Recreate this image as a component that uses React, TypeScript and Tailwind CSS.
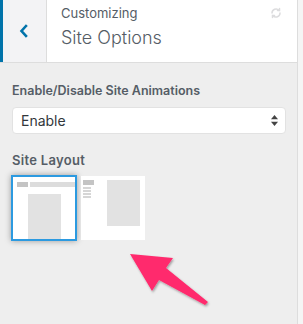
import React from 'react';

const ChevronLeft = () => (
  <svg width="12" height="14" viewBox="0 0 12 14" fill="none" stroke="#0073aa" strokeWidth="2.6" strokeLinecap="square" strokeLinejoin="miter">
    <path d="M8 2 L3.5 7 L8 12" />
  </svg>
);

const RefreshIcon = () => (
  <svg width="12" height="12" viewBox="0 0 24 24" fill="none" stroke="#dcdcde" strokeWidth="3" strokeLinecap="round">
    <path d="M4 12a8 8 0 0 1 14-5.3" />
    <path d="M20 12a8 8 0 0 1-14 5.3" />
    <path d="M19 3v4h-4" />
    <path d="M5 21v-4h4" />
  </svg>
);

// annotation arrow drawn over the screenshot
const PointerArrow = () => (
  <svg className="absolute left-0 top-0 pointer-events-none" width="303" height="324" viewBox="0 0 303 324">
    <defs>
      <filter id="sh" x="-20%" y="-20%" width="140%" height="140%">
        <feDropShadow dx="1" dy="1.5" stdDeviation="1" floodColor="#000" floodOpacity="0.35" />
      </filter>
    </defs>
    <polygon points="130,254 173,258 166,268 208,302 205,305 159,280 152,291" fill="#ff2a6d" filter="url(#sh)" />
  </svg>
);

const BoxedLayout = () => (
  <div className="w-[66px] h-[66px] bg-white border-2 border-[#2c9ae0] shadow-[0_0_6px_rgba(0,0,0,0.35)] flex flex-col pt-[5px] overflow-hidden">
    <div className="flex gap-[2px] pl-[4px]">
      <div className="w-[11px] h-[5px] bg-[#c4c4c4]" />
      <div className="w-[45px] h-[5px] bg-[#dcdcdc]" />
    </div>
    <div className="mt-[7px] ml-[15px] w-[33px] flex-1 bg-[#e2e2e2]" />
  </div>
);

const SidebarLayout = () => (
  <div className="w-[64px] h-[64px] mt-[1px] bg-white flex pt-[4px] pl-[2px]">
    <div className="w-[11px] flex flex-col">
      <div className="h-[5px] bg-[#c4c4c4]" />
      <div className="mt-[2px] flex flex-col gap-[1px] w-[8px]">
        <div className="h-[2px] bg-[#d6d6d6]" />
        <div className="h-[2px] bg-[#d6d6d6]" />
        <div className="h-[2px] bg-[#d6d6d6]" />
        <div className="h-[2px] bg-[#d6d6d6]" />
      </div>
    </div>
    <div className="ml-[13px] w-[33px] h-[46px] bg-[#e2e2e2]" />
  </div>
);

export default function App() {
  return (
    <div className="relative w-[303px] h-[324px] overflow-hidden bg-[#f5f5f5] flex" style={{ fontFamily: 'Inter, "Noto Sans", sans-serif' }}>
      <div className="w-[298px] h-full bg-[#eeeeee] border-r border-[#dddddd] flex flex-col">
        <div className="h-[63px] flex border-b border-[#dddddd] bg-white">
          <div className="w-[3px] bg-[#0073aa]" />
          <div className="w-[44px] bg-[#f3f3f5] border-r border-[#dddddd] flex items-center justify-center pr-[2px]">
            <ChevronLeft />
          </div>
          <div className="flex-1 flex pl-[14px] pr-[15px] pt-[4px]">
            <div className="flex-1">
              <div className="text-[13px] leading-[18px] text-[#555d66]">Customizing</div>
              <div className="text-[18px] leading-[24px] font-light text-[#555d66] mt-[4px]">Site Options</div>
            </div>
            <div className="pt-[3px]"><RefreshIcon /></div>
          </div>
        </div>
        <div className="px-[12px] pt-[19px]">
          <div className="text-[12.5px] leading-[18px] font-semibold text-[#555d66]">Enable/Disable Site Animations</div>
          <div className="mt-[7px] w-[274px] h-[27px] bg-white border border-[#e2e2e2] rounded-[4px] flex items-center justify-between pl-[8px] pr-[7px]">
            <span className="text-[14px] text-[#32373c]">Enable</span>
            <svg width="7" height="11" viewBox="0 0 7 11">
              <polygon points="3.5,0 7,4.3 0,4.3" fill="#444" />
              <polygon points="3.5,11 7,6.7 0,6.7" fill="#444" />
            </svg>
          </div>
          <div className="mt-[17px] text-[13px] leading-[18px] font-semibold text-[#555d66] tracking-[0.3px]">Site Layout</div>
          <div className="mt-[6px] flex gap-[4px] -ml-[1px]">
            <BoxedLayout />
            <SidebarLayout />
          </div>
        </div>
      </div>
      <PointerArrow />
    </div>
  );
}
